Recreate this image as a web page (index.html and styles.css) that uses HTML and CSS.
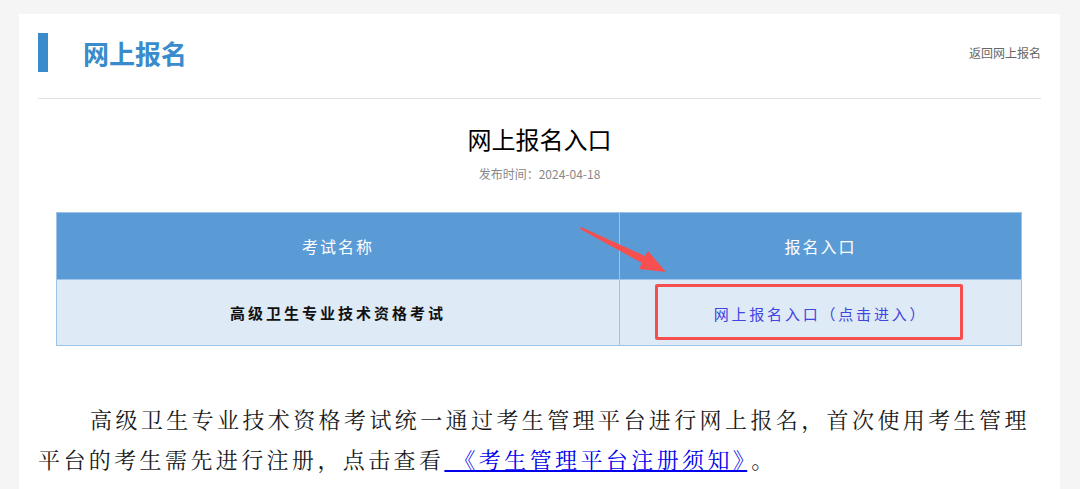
FILE: index.html
```html
<!DOCTYPE html>
<html lang="zh-CN">
<head>
    <meta charset="UTF-8">
    <meta name="viewport" content="width=device-width, initial-scale=1.0">
    <title>网上报名入口</title>
    <link rel="stylesheet" href="styles.css">
</head>
<body>

    <div class="card">
        <!-- Section header -->
        <div class="section-head">
            <div class="section-title">
                <span class="bar"></span>
                <h1>网上报名</h1>
            </div>
            <a href="#" class="back-link">返回网上报名</a>
        </div>

        <!-- Article -->
        <div class="article">
            <h2 class="article-title">网上报名入口</h2>
            <p class="article-date">发布时间：2024-04-18</p>

            <div class="table-wrap">
                <table class="entry-table">
                    <colgroup>
                        <col class="col-name">
                        <col class="col-entry">
                    </colgroup>
                    <tr>
                        <th>考试名称</th>
                        <th>报名入口</th>
                    </tr>
                    <tr>
                        <td class="exam-name">高级卫生专业技术资格考试</td>
                        <td class="entry-cell">
                            <a href="#" class="entry-link">网上报名入口（点击进入）</a>
                            <span class="mark-box"></span>
                        </td>
                    </tr>
                </table>
                <svg class="arrow" width="160" height="70" viewBox="576 221 160 70">
                    <polygon points="581,226 645,255 648,250 666,271 639,268 642,262 580,228" fill="#f5504f"/>
                </svg>
            </div>

            <p class="notice">高级卫生专业技术资格考试统一通过考生管理平台进行网上报名，首次使用考生管理平台的考生需先进行注册，点击查看<a href="#" class="notice-link"> 《考生管理平台注册须知》</a><span class="notice-end">。</span></p>
        </div>
    </div>

</body>
</html>
```

FILE: styles.css
```css
body {
    margin: 0;
    padding: 0;
    background-color: #f5f5f5;
    font-family: "Noto Sans CJK SC", "Liberation Sans", sans-serif;
    color: #333;
}

.card {
    background-color: #ffffff;
    margin: 14px 20px 0 19px;
    padding: 19px 19px 20px 19px;
    min-height: 460px;
}

/* Section header */
.section-head {
    display: flex;
    justify-content: space-between;
    align-items: center;
    padding-bottom: 26px;
    border-bottom: 1px solid #e2e2e2;
}

.section-title {
    display: flex;
    align-items: center;
}

.section-title .bar {
    display: block;
    width: 10px;
    height: 39px;
    background-color: #3a8bcc;
}

.section-title h1 {
    margin: 0 0 0 35px;
    font-size: 26px;
    line-height: 39px;
    font-weight: bold;
    color: #3a8bcc;
}

.back-link {
    font-size: 12px;
    color: #666;
    text-decoration: none;
}

/* Article */
.article-title {
    margin: 24px 0 0;
    text-align: center;
    font-size: 24px;
    line-height: 32px;
    font-weight: normal;
    color: #000;
}

.article-date {
    margin: 9px 0 0;
    text-align: center;
    font-size: 12px;
    line-height: 20px;
    color: #888;
}

.table-wrap {
    position: relative;
    margin: 28px 19px 0 18px;
}

.entry-table {
    width: 100%;
    border-collapse: collapse;
    table-layout: fixed;
}

.col-name {
    width: 563px;
}

.entry-table th,
.entry-table td {
    border: 1px solid #9dc3e6;
    text-align: center;
}

.entry-table th {
    height: 66px;
    padding: 0;
    background-color: #5b9bd5;
    color: #ffffff;
    font-size: 16px;
    font-weight: normal;
    letter-spacing: 2px;
}

.entry-table td {
    height: 65px;
    padding: 0;
    background-color: #deeaf6;
}

.exam-name {
    font-size: 15px;
    font-weight: bold;
    color: #111;
    letter-spacing: 3px;
}

.entry-cell {
    position: relative;
}

.entry-link {
    color: #4343e0;
    font-size: 15px;
    letter-spacing: 2.8px;
    text-decoration: none;
}

/* Red annotation box */
.mark-box {
    position: absolute;
    left: 35px;
    top: 4px;
    width: 302px;
    height: 50px;
    border: 3px solid #f5504f;
    border-radius: 2px;
}

.arrow {
    position: absolute;
    left: 520px;
    top: 10px;
}

.notice {
    margin: 53px 0 0;
    font-family: "Noto Serif CJK SC", "Noto Sans CJK SC", serif;
    font-size: 22px;
    line-height: 40px;
    letter-spacing: 3.4px;
    text-indent: 52px;
    color: #1a1a1a;
}

.notice-link {
    color: #0000ee;
    text-decoration: underline;
}

.notice-end {
    margin-left: 4px;
}
```
